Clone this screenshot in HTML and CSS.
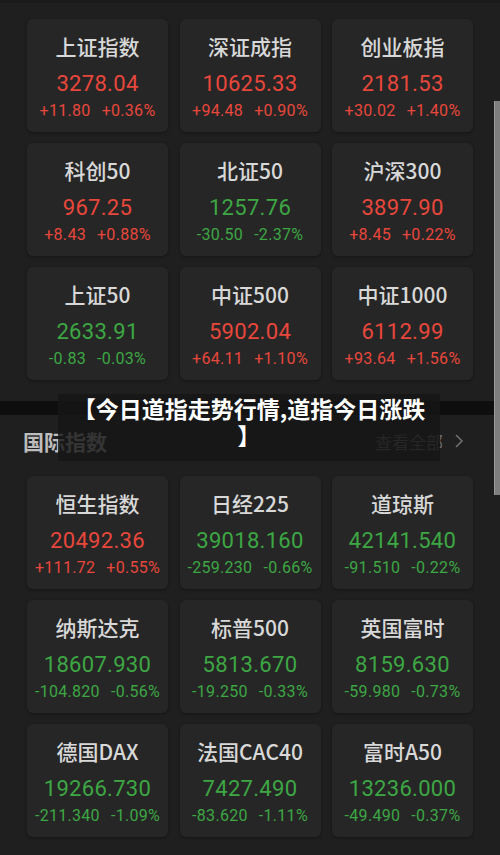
FILE: index.html
```html
<!DOCTYPE html>
<html lang="zh-CN">
<head>
    <meta charset="UTF-8">
    <meta name="viewport" content="width=device-width, initial-scale=1.0">
    <title>今日道指走势行情</title>
    <link rel="stylesheet" href="styles.css">
</head>
<body>
    <div class="topbar"></div>

    <!-- A股指数 -->
    <div class="grid grid-main">
        <div class="card up">
            <div class="name">上证指数</div>
            <div class="price">3278.04</div>
            <div class="change"><span>+11.80</span><span>+0.36%</span></div>
        </div>
        <div class="card up">
            <div class="name">深证成指</div>
            <div class="price">10625.33</div>
            <div class="change"><span>+94.48</span><span>+0.90%</span></div>
        </div>
        <div class="card up">
            <div class="name">创业板指</div>
            <div class="price">2181.53</div>
            <div class="change"><span>+30.02</span><span>+1.40%</span></div>
        </div>
        <div class="card up">
            <div class="name">科创50</div>
            <div class="price">967.25</div>
            <div class="change"><span>+8.43</span><span>+0.88%</span></div>
        </div>
        <div class="card down">
            <div class="name">北证50</div>
            <div class="price">1257.76</div>
            <div class="change"><span>-30.50</span><span>-2.37%</span></div>
        </div>
        <div class="card up">
            <div class="name">沪深300</div>
            <div class="price">3897.90</div>
            <div class="change"><span>+8.45</span><span>+0.22%</span></div>
        </div>
        <div class="card down">
            <div class="name">上证50</div>
            <div class="price">2633.91</div>
            <div class="change"><span>-0.83</span><span>-0.03%</span></div>
        </div>
        <div class="card up">
            <div class="name">中证500</div>
            <div class="price">5902.04</div>
            <div class="change"><span>+64.11</span><span>+1.10%</span></div>
        </div>
        <div class="card up">
            <div class="name">中证1000</div>
            <div class="price">6112.99</div>
            <div class="change"><span>+93.64</span><span>+1.56%</span></div>
        </div>
    </div>

    <!-- 国际指数 -->
    <div class="section-head">
        <h2>国际指数</h2>
        <a class="more">查看全部
            <svg width="12" height="16" viewBox="0 0 12 16"><path d="M3 2 L9 8 L3 14" fill="none" stroke="currentColor" stroke-width="1.6"/></svg>
        </a>
    </div>

    <div class="grid">
        <div class="card up">
            <div class="name">恒生指数</div>
            <div class="price">20492.36</div>
            <div class="change"><span>+111.72</span><span>+0.55%</span></div>
        </div>
        <div class="card down">
            <div class="name">日经225</div>
            <div class="price">39018.160</div>
            <div class="change"><span>-259.230</span><span>-0.66%</span></div>
        </div>
        <div class="card down">
            <div class="name">道琼斯</div>
            <div class="price">42141.540</div>
            <div class="change"><span>-91.510</span><span>-0.22%</span></div>
        </div>
        <div class="card down">
            <div class="name">纳斯达克</div>
            <div class="price">18607.930</div>
            <div class="change"><span>-104.820</span><span>-0.56%</span></div>
        </div>
        <div class="card down">
            <div class="name">标普500</div>
            <div class="price">5813.670</div>
            <div class="change"><span>-19.250</span><span>-0.33%</span></div>
        </div>
        <div class="card down">
            <div class="name">英国富时</div>
            <div class="price">8159.630</div>
            <div class="change"><span>-59.980</span><span>-0.73%</span></div>
        </div>
        <div class="card down">
            <div class="name">德国DAX</div>
            <div class="price">19266.730</div>
            <div class="change"><span>-211.340</span><span>-1.09%</span></div>
        </div>
        <div class="card down">
            <div class="name">法国CAC40</div>
            <div class="price">7427.490</div>
            <div class="change"><span>-83.620</span><span>-1.11%</span></div>
        </div>
        <div class="card down">
            <div class="name">富时A50</div>
            <div class="price">13236.000</div>
            <div class="change"><span>-49.490</span><span>-0.37%</span></div>
        </div>
    </div>

    <!-- title overlay -->
    <div class="title-strip"></div>
    <div class="title-box">【今日道指走势行情,道指今日涨跌】</div>

    <div class="scrollbar"></div>
</body>
</html>
```

FILE: styles.css
```css
body {
    margin: 0;
    background-color: #1f1f1f;
    font-family: "Noto Sans CJK SC", "Noto Sans", sans-serif;
    position: relative;
    height: 855px;
    overflow: hidden;
}
.topbar {
    height: 3px;
    background-color: #1a1a1a;
}
.grid {
    display: grid;
    grid-template-columns: repeat(3, 141px);
    grid-auto-rows: 113px;
    gap: 11px 11.5px;
    padding: 0 28px 0 27px;
}
.grid-main {
    margin-top: 16px;
}
.card {
    background-color: #262626;
    border-radius: 6px;
    box-shadow: 0 1px 3px rgba(0, 0, 0, 0.35);
    display: flex;
    flex-direction: column;
    align-items: center;
    padding-top: 13px;
    box-sizing: border-box;
}
.name {
    color: #d8d8d8;
    font-size: 21px;
    line-height: 28px;
    font-weight: 500;
}
.price {
    font-family: Roboto, "Liberation Sans", sans-serif;
    font-size: 22px;
    line-height: 30px;
    margin-top: 9px;
    letter-spacing: 0.3px;
}
.change {
    font-family: Roboto, "Liberation Sans", sans-serif;
    font-size: 16px;
    line-height: 18px;
    margin-top: 3px;
    letter-spacing: 0.3px;
    display: flex;
    gap: 11px;
}
.up .price,
.up .change {
    color: #e8473c;
}
.down .price,
.down .change {
    color: #3da744;
}
.section-head {
    display: flex;
    justify-content: space-between;
    align-items: center;
    padding: 0 35px 0 23px;
    margin: 46px 0 20px;
    height: 30px;
}
.section-head h2 {
    margin: 0;
    font-size: 21px;
    font-weight: 700;
    color: #bdbdbd;
}
.more {
    color: #6f6f6f;
    font-size: 17px;
    display: flex;
    align-items: center;
    gap: 10px;
}
.title-strip {
    position: absolute;
    left: 0;
    right: 0;
    top: 401px;
    height: 14px;
    background-color: rgba(0, 0, 0, 0.55);
}
.title-box {
    position: absolute;
    left: 58px;
    top: 394px;
    width: 382px;
    box-sizing: border-box;
    padding: 1px 12px 12px;
    background-color: rgba(22, 22, 22, 0.82);
    color: #ffffff;
    font-size: 23px;
    font-weight: 700;
    line-height: 27px;
    text-align: center;
    line-break: anywhere;
}
.scrollbar {
    position: absolute;
    right: 0;
    top: 101px;
    width: 6px;
    height: 394px;
    background-color: #7e7e7e;
    border-left: 1px solid #9a9a9a;
    box-sizing: border-box;
}
```
